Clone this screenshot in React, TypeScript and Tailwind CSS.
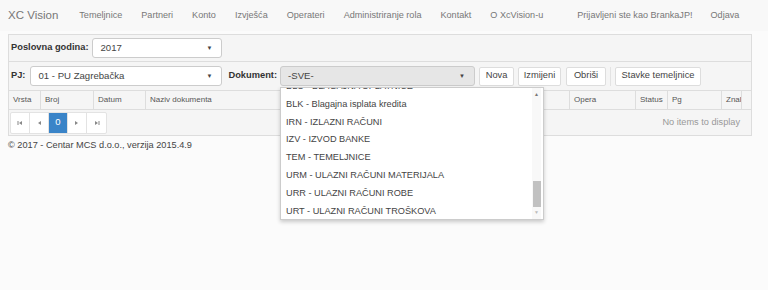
const navItems = ['Temeljnice', 'Partneri', 'Konto', 'Izvješća', 'Operateri', 'Administriranje rola', 'Kontakt', 'O XcVision-u'];

const columns = [
  { title: 'Vrsta', w: 'w-[32px]' },
  { title: 'Broj', w: 'w-[53px]' },
  { title: 'Datum', w: 'w-[52px]' },
  { title: 'Naziv dokumenta', w: 'w-[424px]' },
  { title: 'Opera', w: 'w-[66px]' },
  { title: 'Status', w: 'w-[32px]' },
  { title: 'Pg', w: 'w-[54px]' },
  { title: 'Znal', w: 'w-[20px]' },
];

const options = [
  'BLU - BLAGAJNA UPLATNICE',
  'BLK - Blagajna isplata kredita',
  'IRN - IZLAZNI RAČUNI',
  'IZV - IZVOD BANKE',
  'TEM - TEMELJNICE',
  'URM - ULAZNI RAČUNI MATERIJALA',
  'URR - ULAZNI RAČUNI ROBE',
  'URT - ULAZNI RAČUNI TROŠKOVA',
];

const Caret = () => <span className="text-[6px] text-[#444] leading-none">▼</span>;

const Select = ({ value, className }: { value: string; className: string }) => (
  <div className={`flex items-center justify-between h-[20px] border border-[#ccc] rounded-[3px] pl-[7px] pr-[9px] text-[9.6px] text-[#444] ${className}`}>
    <span>{value}</span>
    <Caret />
  </div>
);

const Button = ({ label, className }: { label: string; className: string }) => (
  <div className={`h-[19px] flex items-center justify-center border border-[#ddd] rounded-[2px] bg-white text-[9.3px] text-[#444] ${className}`}>
    {label}
  </div>
);

const PagerBtn = ({ children, active }: { children: React.ReactNode; active?: boolean }) => (
  <div className={`w-[19px] h-[20px] flex items-center justify-center border-r border-[#e3e3e3] last:border-r-0 ${active ? 'bg-[#3a84c8] text-white text-[9.5px]' : 'text-[#888]'}`}>
    {children}
  </div>
);

const Tri = ({ dir, bar }: { dir: 'l' | 'r'; bar?: boolean }) => (
  <svg width="6" height="6" viewBox="0 0 6 6" fill="currentColor">
    {dir === 'l' ? <polygon points="5,1 5,5 2,3" /> : <polygon points="1,1 1,5 4,3" />}
    {bar && (dir === 'l' ? <rect x="0.5" y="1" width="1" height="4" /> : <rect x="4.5" y="1" width="1" height="4" />)}
  </svg>
);

export default function App() {
  return (
    <div className="w-[768px] h-[290px] bg-[#fbfbfb] overflow-hidden relative" style={{ fontFamily: '"Liberation Sans", Arial, sans-serif' }}>
      <nav className="h-[31px] bg-[#f8f8f8] flex items-center pl-[8px] text-[9.1px] text-[#777] whitespace-nowrap">
        <span className="text-[11.5px] text-[#777] mr-[21px]">XC Vision</span>
        <div className="flex gap-[19px]">
          {navItems.map((n) => (
            <span key={n}>{n}</span>
          ))}
        </div>
        <span className="ml-[34px]">Prijavljeni ste kao BrankaJP!</span>
        <span className="ml-[18px]">Odjava</span>
      </nav>

      <div className="mx-[8px] w-[744px] mt-[3px] border border-[#ddd] bg-[#f5f5f5]">
        <div className="h-[27px] flex items-center pl-[2px] border-b border-[#ddd]">
          <span className="text-[9.3px] font-bold text-[#333]">Poslovna godina:</span>
          <Select value="2017" className="w-[130px] bg-white ml-[4px]" />
        </div>
        <div className="h-[29px] flex items-center pl-[2px] border-b border-[#ddd] whitespace-nowrap">
          <span className="text-[9.3px] font-bold text-[#333]">PJ:</span>
          <Select value="01 - PU Zagrebačka" className="w-[192px] bg-white ml-[5px]" />
          <span className="text-[9.3px] font-bold text-[#333] ml-[6px]">Dokument:</span>
          <Select value="-SVE-" className="w-[195px] bg-[#e6e6e6] ml-[3px]" />
          <Button label="Nova" className="w-[35px] ml-[4px]" />
          <Button label="Izmijeni" className="w-[43px] ml-[4px]" />
          <Button label="Obriši" className="w-[40px] ml-[5px]" />
          <div className="w-px h-[19px] bg-[#e3e3e3] ml-[4px]" />
          <Button label="Stavke temeljnice" className="w-[86px] ml-[4px]" />
        </div>
        <div className="h-[19px] flex border-b border-[#ddd] bg-[#f5f5f5] text-[8px] text-[#555]">
          {columns.map((c) => (
            <div key={c.title} className={`${c.w} shrink-0 border-r border-[#ddd] flex items-center pl-[4px] overflow-hidden whitespace-nowrap`}>
              {c.title}
            </div>
          ))}
        </div>
        <div className="h-[25px] flex items-center justify-between pl-[1px] pr-[11px]">
          <div className="flex border border-[#e3e3e3] rounded-[2px] bg-white">
            <PagerBtn>
              <Tri dir="l" bar />
            </PagerBtn>
            <PagerBtn>
              <Tri dir="l" />
            </PagerBtn>
            <PagerBtn active>0</PagerBtn>
            <PagerBtn>
              <Tri dir="r" />
            </PagerBtn>
            <PagerBtn>
              <Tri dir="r" bar />
            </PagerBtn>
          </div>
          <span className="text-[9.2px] text-[#999]">No items to display</span>
        </div>
      </div>

      <div className="pl-[8px] mt-[3px] text-[9.2px] text-[#444]">© 2017 - Centar MCS d.o.o., verzija 2015.4.9</div>

      <div className="absolute left-[280px] top-[87px] w-[264px] h-[133px] bg-white border border-[#ccc] shadow-[0_2px_4px_rgba(0,0,0,0.2)] overflow-hidden flex">
        <div className="flex-1 overflow-hidden">
          <div className="-mt-[10px]">
            {options.map((o) => (
              <div key={o} className="h-[17.8px] flex items-center pl-[5px] text-[9.2px] text-[#444] whitespace-nowrap">
                {o}
              </div>
            ))}
          </div>
        </div>
        <div className="w-[9px] mr-[2px] flex flex-col items-center bg-[#f8f8f8]">
          <span className="text-[5px] text-[#777] mt-[3px]">▲</span>
          <div className="flex-1" />
          <div className="w-[8px] h-[26px] bg-[#c1c1c1] mb-[2px]" />
          <span className="text-[5px] text-[#bbb] mb-[3px]">▼</span>
        </div>
      </div>
    </div>
  );
}
